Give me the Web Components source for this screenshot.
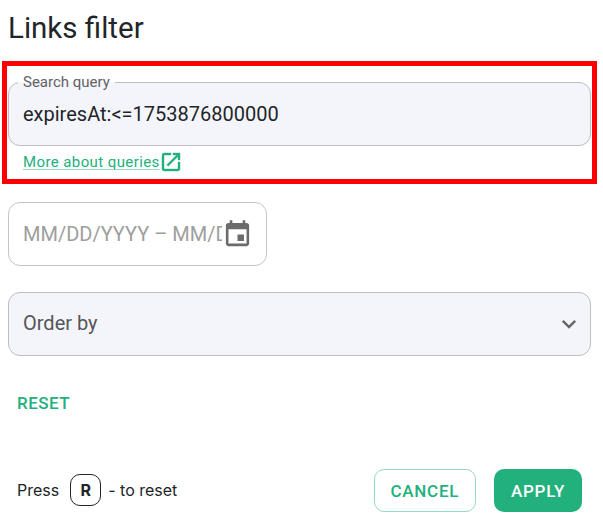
<!DOCTYPE html>
<html>
<head>
<meta charset="utf-8">
<style>
  body { margin: 0; background: #fff; color: #212529; font-family: Roboto, "Liberation Sans", sans-serif; }
</style>
</head>
<body>
<template id="filter-field-tpl">
  <style>
    :host { display: block; }
    fieldset {
      display: block; margin: 0; padding: 0 14px; min-width: 0; box-sizing: border-box;
      height: 71px; border: 1px solid #bdbdc4; border-radius: 12px; background: #f4f5fa;
      font-size: 20px; color: #212529;
    }
    legend { padding: 0 5px; margin-left: -5px; font-size: 15px; line-height: 15px; color: #616166; }
    .value { height: 47px; display: flex; align-items: center; }
  </style>
  <fieldset><legend><slot name="label"></slot></legend><div class="value"><slot></slot></div></fieldset>
</template>

<template id="date-field-tpl">
  <style>
    :host { display: block; width: 259px; }
    .box {
      height: 64px; box-sizing: border-box; border: 1px solid #c4c4c8; border-radius: 12px;
      display: flex; align-items: center; padding: 0 14px;
    }
    .text { flex: 1; min-width: 0; overflow: hidden; white-space: nowrap; font-size: 20px; color: #9e9e9e; }
    svg { flex: none; width: 31px; height: 31px; fill: #6b6b6b; margin-right: -1px; }
  </style>
  <div class="box">
    <div class="text"><slot></slot></div>
    <svg viewBox="0 0 24 24"><path d="M17 12h-5v5h5v-5zM16 1v2H8V1H6v2H5c-1.11 0-1.99.9-1.99 2L3 19c0 1.1.89 2 2 2h14c1.1 0 2-.9 2-2V5c0-1.1-.9-2-2-2h-1V1h-2zm3 18H5V8h14v11z"/></svg>
  </div>
</template>

<template id="select-field-tpl">
  <style>
    :host { display: block; }
    .box {
      height: 64px; box-sizing: border-box; border: 1px solid #bdbdc4; border-radius: 12px; background: #f4f5fa;
      display: flex; align-items: center; justify-content: space-between; padding: 0 7px 0 14px;
      font-size: 20px; color: #55565b;
    }
    span { padding-bottom: 3px; }
    svg { width: 28px; height: 28px; fill: #66666b; }
  </style>
  <div class="box">
    <span><slot></slot></span>
    <svg viewBox="0 0 24 24"><path d="M16.59 8.59 12 13.17 7.41 8.59 6 10l6 6 6-6z"/></svg>
  </div>
</template>

<template id="app-button-tpl">
  <style>
    :host { display: inline-block; vertical-align: top; }
    button {
      display: block; font: 500 17px Roboto, sans-serif; letter-spacing: .7px; height: 43px; box-sizing: border-box;
      border-radius: 10px; cursor: pointer; padding: 0 16px; border: 1px solid transparent;
      background: transparent; color: #22b07d;
    }
    :host([variant="outlined"]) button { border-color: #96dac1; }
    :host([variant="primary"]) button { background: #22b07d; color: #fff; }
    :host([variant="text"]) button { padding: 0 8px; height: 36px; letter-spacing: .5px; }
  </style>
  <button><slot></slot></button>
</template>

<template id="links-filter-tpl">
  <style>
    :host { display: block; width: 603px; height: 532px; box-sizing: border-box; padding: 0 12px 0 8px; }
    h1 { margin: 0; font-size: 29.5px; font-weight: 400; line-height: 34px; padding-top: 11px; height: 50px; box-sizing: border-box; color: #212529; }
    .highlight {
      margin: 11px -6px 0 -6px; height: 123px; box-sizing: border-box; border: 5px solid #f00;
      padding: 9px 1px 0 1px;
    }
    .help { display: flex; align-items: center; height: 24px; margin: 4px 0 0 15px; font-size: 15px; letter-spacing: .4px; }
    a { color: #22b07d; text-decoration: underline; text-underline-offset: 2px; text-decoration-thickness: 1px; text-decoration-color: #96dac1; }
    .help svg { width: 24px; height: 24px; fill: #22b07d; stroke: #22b07d; stroke-width: .4; margin-left: -1px; }
    date-field { margin-top: 18px; }
    select-field { margin-top: 26px; }
    .reset { margin-top: 29px; height: 36px; }
    footer { margin-top: 48px; display: flex; align-items: center; justify-content: space-between; padding: 0 9px; font-size: 16px; }
    .hint { display: flex; align-items: center; gap: 7px; padding-bottom: 2px; font-family: Inter, Roboto, sans-serif; }
    kbd { font: 700 16px Inter, Roboto, sans-serif; display: flex; align-items: center; justify-content: center; width: 31px; height: 32px; margin-left: 4px; box-sizing: border-box; border: 1px solid #212529; border-radius: 10px; }
    .actions { display: flex; gap: 18px; }
  </style>
  <h1>Links filter</h1>
  <div class="highlight">
    <filter-field><span slot="label">Search query</span>expiresAt:&lt;=1753876800000</filter-field>
    <div class="help"><a href="#">More about queries</a><svg viewBox="0 0 24 24"><path d="M19 19H5V5h7V3H5c-1.11 0-2 .9-2 2v14c0 1.1.89 2 2 2h14c1.1 0 2-.9 2-2v-7h-2v7zM14 3v2h3.59l-9.83 9.83 1.41 1.41L19 6.41V10h2V3h-7z"/></svg></div>
  </div>
  <date-field>MM/DD/YYYY – MM/DD/YYYY</date-field>
  <select-field>Order by</select-field>
  <div class="reset"><app-button variant="text">RESET</app-button></div>
  <footer>
    <div class="hint"><span>Press</span><kbd>R</kbd><span>- to reset</span></div>
    <div class="actions"><app-button variant="outlined">CANCEL</app-button><app-button variant="primary">APPLY</app-button></div>
  </footer>
</template>

<links-filter></links-filter>

<script>
  function defineFromTemplate(tag, tplId) {
    customElements.define(tag, class extends HTMLElement {
      constructor() {
        super();
        this.attachShadow({ mode: 'open' });
        this.shadowRoot.appendChild(document.getElementById(tplId).content.cloneNode(true));
      }
    });
  }

  defineFromTemplate('filter-field', 'filter-field-tpl');
  defineFromTemplate('date-field', 'date-field-tpl');
  defineFromTemplate('select-field', 'select-field-tpl');
  defineFromTemplate('app-button', 'app-button-tpl');
  defineFromTemplate('links-filter', 'links-filter-tpl');
</script>
</body>
</html>
